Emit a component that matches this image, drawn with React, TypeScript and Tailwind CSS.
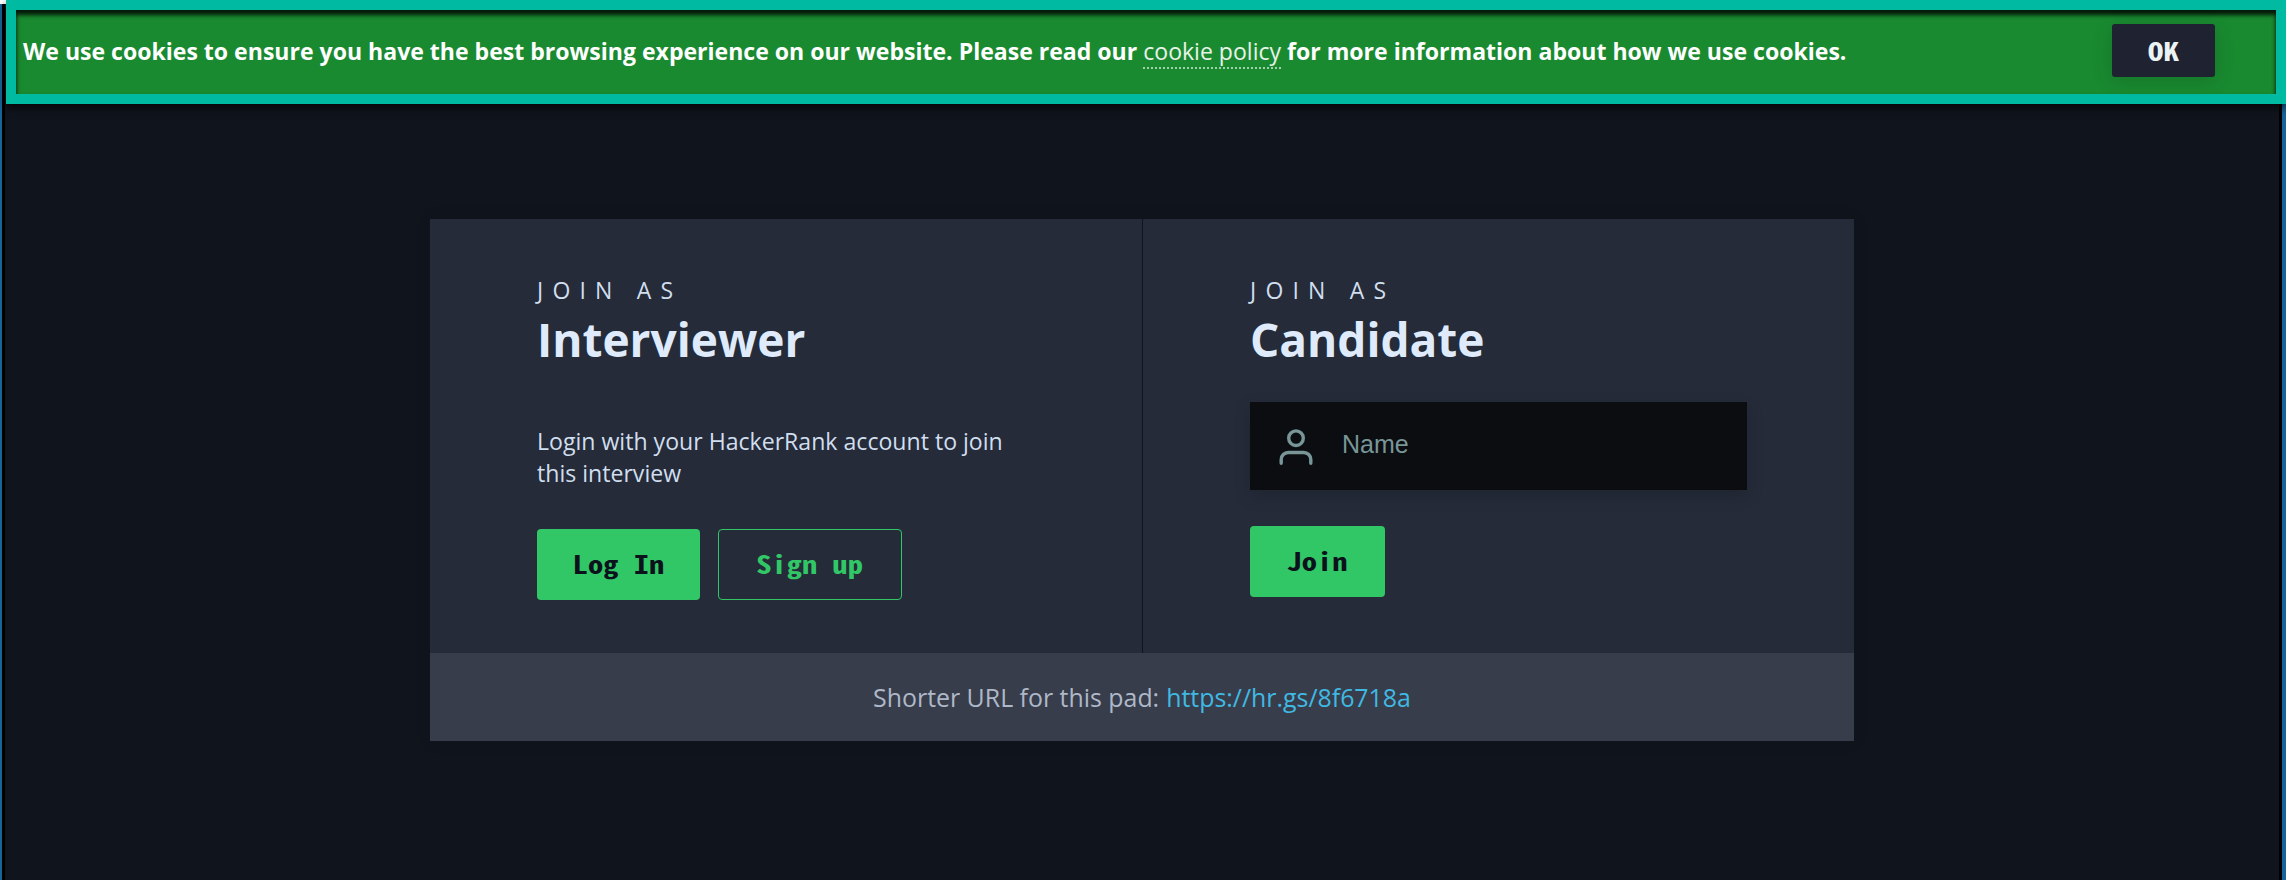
import type { ReactNode } from "react";

const MONO = "font-['Noto_Sans_Mono_CJK_SC','DejaVu_Sans_Mono',monospace]";

function CookieBanner() {
  return (
    <div className="relative z-10 -mt-1 ml-[4px] flex h-[104px] w-[2280px] shrink-0 items-start border-[10px] border-[#00bba2] bg-[#198a30] shadow-[0_4px_8px_rgba(0,0,0,0.7),inset_0_5px_4px_rgba(0,0,0,0.75),inset_0_3px_4px_rgba(0,0,0,0.35)]">
      <p className="ml-[7px] mt-[23px] whitespace-nowrap text-[23.05px] font-bold leading-[36px] text-white">
        We use cookies to ensure you have the best browsing experience on our website. Please read our{" "}
        <a href="#" className="inline-block border-b-2 border-dotted border-white/60 font-normal leading-[32px] text-white/90">
          cookie policy
        </a>{" "}
        for more information about how we use cookies.
      </p>
      <button className={`${MONO} ml-auto mr-[61px] mt-[14px] h-[53px] w-[103px] rounded-[3px] bg-[#1e2231] text-[25px] font-bold text-[#ebf4f4] shadow-[0_4px_20px_rgba(0,0,0,0.15)]`}>
        <span className="inline-block scale-x-[1.26]">OK</span>
      </button>
    </div>
  );
}

function PanelHeading({ title }: { title: string }) {
  return (
    <h2 className="text-[#dfebfb]">
      <span className="block text-[23px] font-normal leading-[35px] tracking-[9.2px] text-[#d0deee]">JOIN AS</span>
      <span className="block text-[46px] font-bold leading-[62px]">{title}</span>
    </h2>
  );
}

function Button({ children, className }: { children: ReactNode; className: string }) {
  return (
    <button className={`${MONO} h-[71px] whitespace-nowrap rounded-[4px] pb-px text-[25px] font-bold ${className}`}>
      <span className="inline-block scale-x-[1.22]">{children}</span>
    </button>
  );
}

function UserIcon() {
  return (
    <svg width="34" height="38" viewBox="0 0 34 38" fill="none" stroke="#789598" strokeWidth="3.4" strokeLinecap="round">
      <circle cx="17" cy="11.2" r="7.3" />
      <path d="M2.200 36.200v-3.700a7 7 0 0 1 7-7h15.600a7 7 0 0 1 7 7v3.700" />
    </svg>
  );
}

export default function App() {
  return (
    <div className="h-[880px] w-[2286px] overflow-hidden bg-white pt-1 font-['Open_Sans',sans-serif]">
      <main className="flex h-[876px] flex-col border-l-2 border-r-4 border-[#17649b] bg-[#10141c]">
        <div className="flex h-full flex-col border-x-[3px] border-black">
          <div className="-ml-[3px] h-[100px]">
            <CookieBanner />
          </div>
          <section className="ml-[425px] mt-[115px] w-[1424px] shadow-[0_0_16px_rgba(0,0,0,0.08)]">
            <div className="flex h-[434px] bg-[#252b39]">
              <div className="w-[713px] border-r border-[#10141c] pl-[107px] pt-[54px]">
                <PanelHeading title="Interviewer" />
                <p className="mt-[55px] w-[480px] text-[23.1px] leading-[32px] text-[#d0deee]">
                  Login with your HackerRank account to join this interview
                </p>
                <div className="mt-[40px] flex gap-[18px]">
                  <Button className="w-[163px] bg-[#32c766] text-[#0b121c]">Log In</Button>
                  <Button className="w-[184px] border border-[#32c766] text-[#32c766]">Sign up</Button>
                </div>
              </div>
              <div className="flex-1 pl-[107px] pt-[54px]">
                <PanelHeading title="Candidate" />
                <label className="mt-[32px] flex h-[88px] w-[497px] items-center bg-[#0b0d11] pl-[29px] shadow-[0_6px_16px_rgba(0,0,0,0.15)]">
                  <UserIcon />
                  <input
                    placeholder="Name"
                    className="ml-[29px] w-[360px] bg-transparent pb-[3px] font-['Liberation_Sans',Arial,sans-serif] text-[25px] text-[#789598] outline-none placeholder:text-[#789598]"
                  />
                </label>
                <Button className="mt-[36px] w-[135px] bg-[#32c766] text-[#0b121c]">Join</Button>
              </div>
            </div>
            <footer className="flex h-[88px] items-center justify-center gap-[7px] bg-[#383d4b] pt-[2px] text-[24.9px] text-[#aeb8c8]">
              <span>Shorter URL for this pad:</span>
              <a href="#" className="text-[#40b9e2]">https://hr.gs/8f6718a</a>
            </footer>
          </section>
        </div>
      </main>
    </div>
  );
}
